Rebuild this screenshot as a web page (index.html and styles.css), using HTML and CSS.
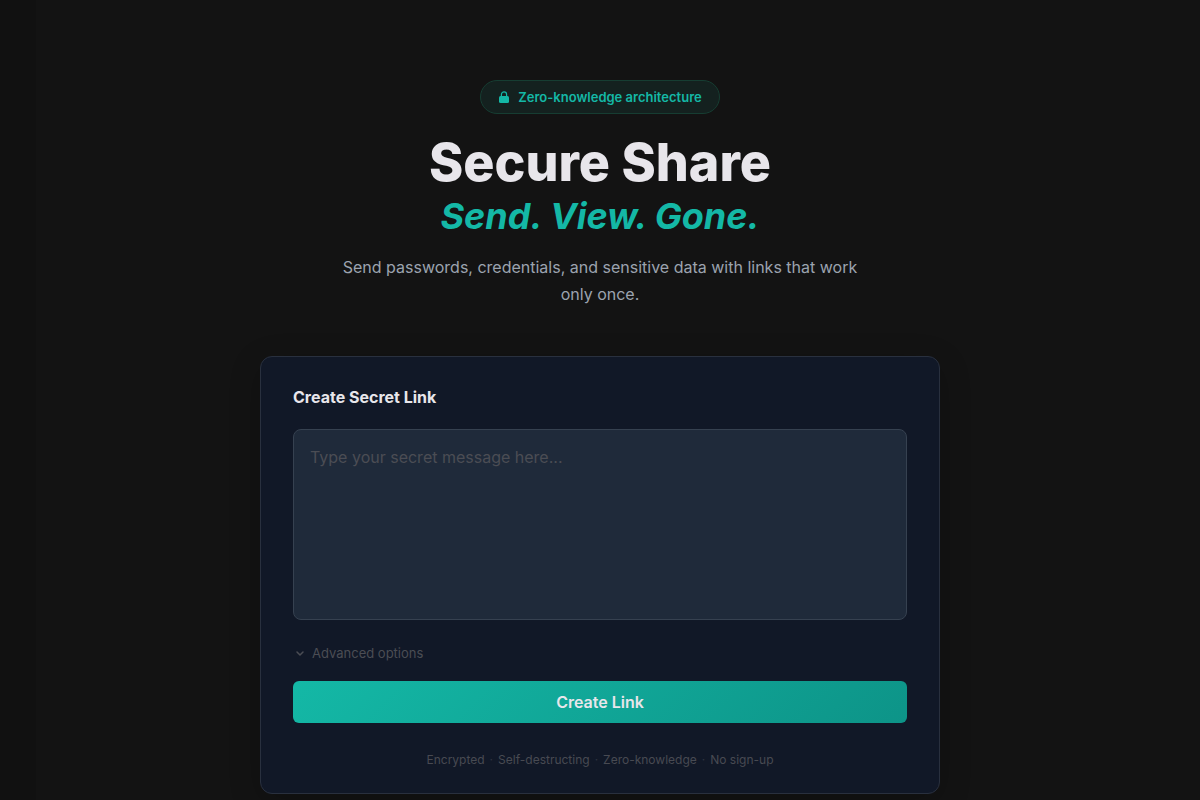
FILE: index.html
```
<!DOCTYPE html>
<html lang="en">
<head>
    <meta charset="UTF-8">
    <meta name="viewport" content="width=device-width, initial-scale=1.0">
    <title>Secure Share</title>
    <link rel="stylesheet" href="styles.css">
</head>
<body>
    <main class="page">
        <header class="hero">
            <div class="badge">
                <svg class="badge-icon" viewBox="0 0 12 12" aria-hidden="true">
                    <path d="M3.4 5.5V3.4a2.6 2.6 0 0 1 5.2 0v2.1" fill="none" stroke="currentColor" stroke-width="1.2"/>
                    <rect x="1" y="5" width="10" height="7" rx="1.5" fill="currentColor"/>
                </svg>
                <span>Zero-knowledge architecture</span>
            </div>
            <h1>Secure Share</h1>
            <p class="tagline">Send. View. Gone.</p>
            <p class="intro">Send passwords, credentials, and sensitive data with links that work only once.</p>
        </header>

        <form class="card">
            <h2><label for="secret">Create Secret Link</label></h2>
            <textarea id="secret" class="secret" placeholder="Type your secret message here..."></textarea>
            <button type="button" class="advanced">
                <svg class="chevron" viewBox="0 0 14 14" aria-hidden="true">
                    <path d="M4 5l3 3 3-3" fill="none" stroke="currentColor" stroke-width="1.5" stroke-linecap="round" stroke-linejoin="round"/>
                </svg>
                <span>Advanced options</span>
            </button>
            <button type="submit" class="create">Create Link</button>
            <p class="features">
                <span>Encrypted</span><i>·</i><span>Self-destructing</span><i>·</i><span>Zero-knowledge</span><i>·</i><span>No sign-up</span>
            </p>
        </form>
    </main>
</body>
</html>
```
FILE: styles.css
```
* {
    box-sizing: border-box;
}
body {
    margin: 0;
    min-height: 100vh;
    font-family: Inter, sans-serif;
    color: #e8e6eb;
    background: linear-gradient(to right, #111111 36px, #131313 36px);
}
h1, h2, p {
    margin: 0;
}
button {
    font-family: inherit;
    cursor: pointer;
}
.page {
    max-width: 720px;
    margin: 0 auto;
    padding: 80px 20px 6px;
}
.hero {
    display: flex;
    flex-direction: column;
    align-items: center;
    text-align: center;
    margin-bottom: 48px;
}
.badge {
    display: flex;
    align-items: center;
    gap: 8px;
    padding: 8px 17px;
    font-size: 13px;
    line-height: 16px;
    font-weight: 600;
    color: #14b8a6;
    background: #14211f;
    border: 1px solid #163d32;
    border-radius: 17px;
}
.badge-icon {
    width: 12px;
    height: 12px;
}
h1 {
    margin-top: 20px;
    font-size: 52px;
    line-height: 57px;
    font-weight: 800;
}
.tagline {
    margin-top: 4px;
    font-size: 36px;
    line-height: 43px;
    font-weight: 700;
    font-style: italic;
    color: #14b8a6;
}
.intro {
    max-width: 520px;
    margin-top: 16px;
    font-size: 16px;
    line-height: 27px;
    color: #9ca3af;
}
.card {
    padding: 32px 32px 24px;
    background: #111827;
    border: 1px solid #29303e;
    border-radius: 12px;
    box-shadow: 0 8px 32px rgba(0, 0, 0, 0.2);
}
h2 {
    margin-bottom: 24px;
    font-size: 16px;
    line-height: 16px;
    font-weight: 700;
}
.secret {
    display: block;
    width: 100%;
    height: 191px;
    padding: 14px 16px;
    font-family: inherit;
    font-size: 16px;
    line-height: 27px;
    color: #e8e6eb;
    background: #1f2a3a;
    border: 1px solid #364150;
    border-radius: 8px;
    resize: none;
}
.secret::placeholder {
    color: #4b4d54;
}
.advanced {
    display: flex;
    align-items: center;
    gap: 5px;
    margin: 24px 0 18px;
    padding: 0;
    font-size: 13px;
    line-height: 19px;
    color: #4b4d54;
    background: none;
    border: none;
}
.chevron {
    width: 14px;
    height: 14px;
}
.create {
    display: block;
    width: 100%;
    padding: 11px;
    font-size: 16px;
    line-height: 20px;
    font-weight: 600;
    color: #e8e6eb;
    background: linear-gradient(135deg, #14b8a6, #0d9488);
    border: none;
    border-radius: 6px;
}
.features {
    display: flex;
    flex-wrap: wrap;
    justify-content: center;
    gap: 5px;
    margin-top: 28px;
    font-size: 12px;
    line-height: 18px;
    color: #484a52;
}
.features i {
    font-style: normal;
    color: #303440;
}
```
